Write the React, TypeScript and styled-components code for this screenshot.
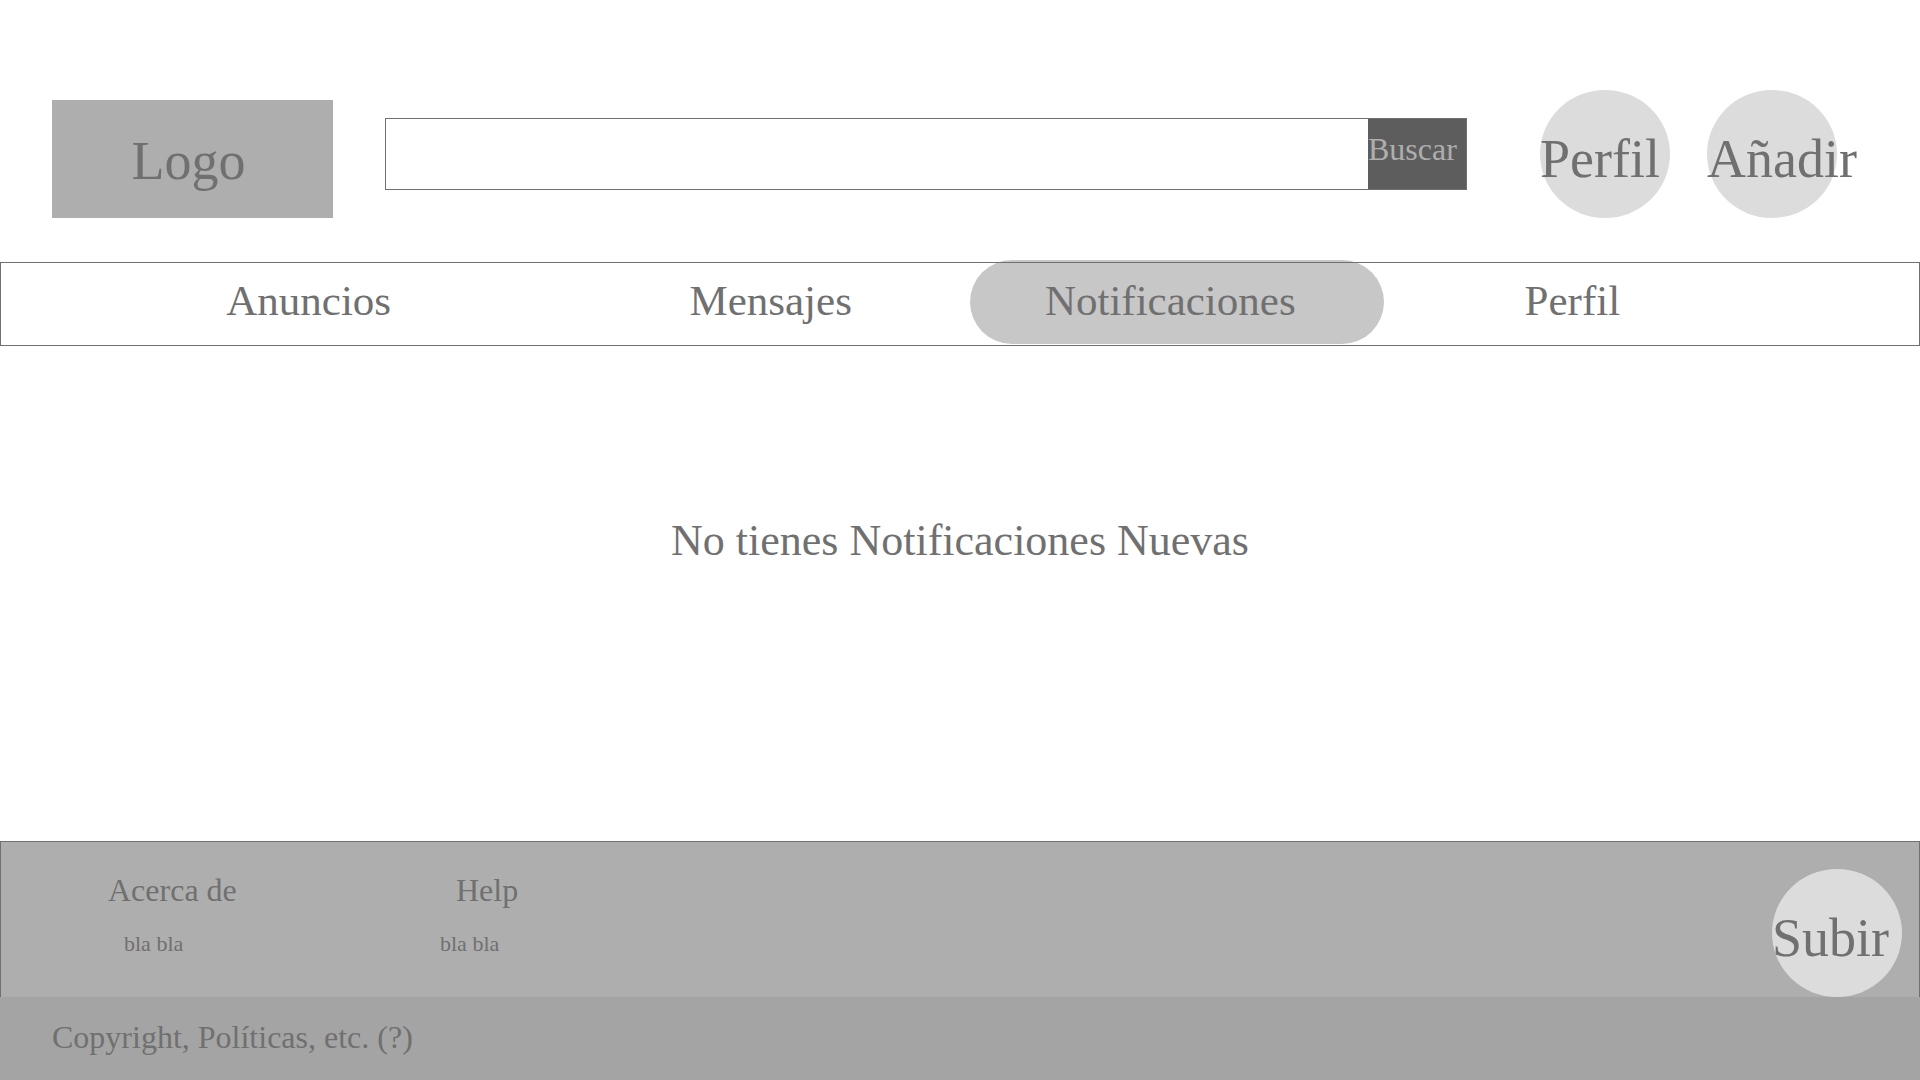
import React from 'react';
import styled, { createGlobalStyle } from 'styled-components';

const ink = '#707070';
const serif = `'Palatino Linotype', Palatino, 'Book Antiqua', 'Liberation Serif', serif`;

const GlobalStyle = createGlobalStyle`
  *, *::before, *::after { box-sizing: border-box; }
  body { margin: 0; background: #fff; color: ${ink}; font-family: ${serif}; }
  button, input { font-family: inherit; margin: 0; }
  a { color: inherit; text-decoration: none; }
  h1, h2, p, ul { margin: 0; padding: 0; font-weight: 400; list-style: none; }
`;

const Page = styled.div`
  display: flex;
  flex-direction: column;
  min-height: 100vh;
  isolation: isolate;
`;

const Header = styled.header`
  display: flex;
  align-items: flex-end;
  padding: 90px 83px 44px 52px;
`;

const Logo = styled.a`
  display: flex;
  align-items: center;
  justify-content: center;
  flex: none;
  width: 281px;
  height: 118px;
  padding-right: 8px;
  padding-top: 4px;
  background: #aeaeae;
  font-size: 54px;
  line-height: 60px;
`;

const Search = styled.form`
  display: flex;
  flex: 1;
  min-width: 0;
  height: 72px;
  margin: 0 73px 28px 52px;
  border: 1px solid ${ink};
`;

const SearchInput = styled.input`
  flex: 1;
  min-width: 0;
  padding: 0 16px;
  border: 0;
  background: #fff;
  color: ${ink};
  font-size: 32px;
`;

const SearchButton = styled.button`
  width: 98px;
  padding: 0 0 10px;
  border: 0;
  background: #5d5d5d;
  color: #aeaeae;
  font-size: 32px;
  line-height: 36px;
  text-align: left;
`;

const Actions = styled.div`
  display: flex;
  gap: 37px;
`;

const RoundButton = styled.button`
  flex: none;
  width: 130px;
  height: 128px;
  padding: 10px 0 0;
  border: 0;
  border-radius: 50%;
  background: #dcdcdc;
  color: ${ink};
  font-size: 54px;
  line-height: 60px;
  text-align: left;
  white-space: nowrap;
`;

const Nav = styled.nav`
  display: grid;
  grid-template-columns: 616fr 309fr 505fr 286fr 204fr;
  height: 84px;
  border: 1px solid ${ink};
`;

const NavLink = styled.a<{ $active?: boolean }>`
  position: relative;
  display: flex;
  align-items: center;
  justify-content: center;
  padding-bottom: 6px;
  padding-right: ${(p) => (p.$active ? 14 : 0)}px;
  font-size: 43px;
  line-height: 48px;

  &::before {
    content: '';
    display: ${(p) => (p.$active ? 'block' : 'none')};
    position: absolute;
    z-index: -1;
    top: -3px;
    left: 9%;
    right: 9%;
    height: 84px;
    border-radius: 42px;
    background: #c7c7c7;
  }
`;

const Main = styled.main`
  flex: 1;
  padding: 171px 52px 80px;
  text-align: center;
`;

const EmptyMessage = styled.h1`
  font-size: 44px;
  line-height: 48px;
`;

const FooterTop = styled.div`
  display: flex;
  align-items: flex-end;
  justify-content: space-between;
  height: 156px;
  padding: 0 17px 0 107px;
  border: 1px solid ${ink};
  border-bottom: 0;
  background: #aeaeae;
`;

const FooterColumns = styled.div`
  display: grid;
  grid-template-columns: 332px auto;
  align-self: flex-start;
  padding-top: 30px;
`;

const FooterHeading = styled.h2<{ $indent?: boolean }>`
  padding-left: ${(p) => (p.$indent ? 16 : 0)}px;
  font-size: 32px;
  line-height: 36px;
`;

const FooterList = styled.ul<{ $indent?: boolean }>`
  padding: 24px 0 0 ${(p) => (p.$indent ? 16 : 0)}px;
  font-size: 22px;
  line-height: 24px;
`;

const FooterBottom = styled.p`
  padding: 22px 52px 25px;
  background: #a4a4a4;
  font-size: 32px;
  line-height: 36px;
`;

const navItems = ['Anuncios', 'Mensajes', 'Notificaciones', 'Perfil'];

export default function App() {
  const scrollUp = () => window.scrollTo({ top: 0, behavior: 'smooth' });

  return (
    <Page>
      <GlobalStyle />
      <Header>
        <Logo href="#">Logo</Logo>
        <Search role="search" onSubmit={(e: React.FormEvent) => e.preventDefault()}>
          <SearchInput type="search" aria-label="Buscar" />
          <SearchButton type="submit">Buscar</SearchButton>
        </Search>
        <Actions>
          <RoundButton type="button">Perfil</RoundButton>
          <RoundButton type="button">Añadir</RoundButton>
        </Actions>
      </Header>
      <Nav>
        {navItems.map((item) => {
          const active = item === 'Notificaciones';
          return (
            <NavLink key={item} href="#" $active={active} aria-current={active ? 'page' : undefined}>
              {item}
            </NavLink>
          );
        })}
      </Nav>
      <Main>
        <EmptyMessage>No tienes Notificaciones Nuevas</EmptyMessage>
      </Main>
      <footer>
        <FooterTop>
          <FooterColumns>
            <section>
              <FooterHeading>Acerca de</FooterHeading>
              <FooterList $indent>
                <li><a href="#">bla bla</a></li>
              </FooterList>
            </section>
            <section>
              <FooterHeading $indent>Help</FooterHeading>
              <FooterList>
                <li><a href="#">bla bla</a></li>
              </FooterList>
            </section>
          </FooterColumns>
          <RoundButton type="button" onClick={scrollUp}>Subir</RoundButton>
        </FooterTop>
        <FooterBottom>Copyright, Políticas, etc. (?)</FooterBottom>
      </footer>
    </Page>
  );
}
